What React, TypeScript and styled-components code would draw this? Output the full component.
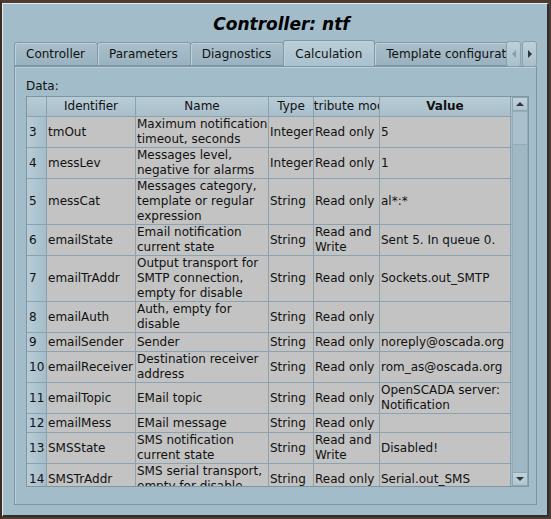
import React from "react";
import styled, { createGlobalStyle } from "styled-components";

const GlobalStyle = createGlobalStyle`
  html, body {
    margin: 0;
    padding: 0;
    background: #4d3b2f;
  }
  body {
    font-family: "DejaVu Sans", "Liberation Sans", sans-serif;
    font-size: 12px;
    color: #111;
  }
`;

const GRID = "#8aa3af";
const COLS = [20, 89, 133, 45, 66, 131];

const Window = styled.div`
  width: 551px;
  height: 519px;
  box-sizing: border-box;
  border-top: 3px solid #4d3b2f;
  border-left: 2px solid #3a2c22;
  border-right: 2px solid #4d3b2f;
  border-bottom: 2px solid #4d3b2f;
`;

const Frame = styled.div`
  height: 100%;
  box-sizing: border-box;
  background: #a3bcc9;
  border-top: 1px solid #e4edf1;
  border-left: 1px solid #e4edf1;
  border-right: 2px solid #2e2e2e;
  border-bottom: 2px solid #2e2e2e;
  display: flex;
  flex-direction: column;
  padding: 0 10px 10px 11px;
`;

const Title = styled.h1`
  margin: 0;
  height: 37px;
  box-sizing: border-box;
  padding: 9px 0 0 12px;
  text-align: center;
  font-size: 17px;
  line-height: 22px;
  font-weight: bold;
  font-style: italic;
  color: #000;
`;

const TabBar = styled.div`
  display: flex;
  height: 26px;
  align-items: flex-end;
  position: relative;
  z-index: 1;
`;

const TabsViewport = styled.div`
  width: 495px;
  display: flex;
  align-items: flex-end;
  overflow: hidden;
  height: 100%;
`;

const Tab = styled.div<{ $active?: boolean }>`
  flex: none;
  box-sizing: border-box;
  height: ${(p) => (p.$active ? "27px" : "24px")};
  margin-bottom: ${(p) => (p.$active ? "-1px" : "0")};
  padding: 0 12px 0 11px;
  display: flex;
  align-items: center;
  white-space: nowrap;
  border: 1px solid #8199a5;
  border-bottom: ${(p) => (p.$active ? "none" : "1px solid #8199a5")};
  border-radius: 3px 3px 0 0;
  margin-right: -1px;
  background: ${(p) =>
    p.$active
      ? "linear-gradient(#b9ced8, #a9c1cd)"
      : "linear-gradient(#a9bfcb, #9ab2bf)"};
  box-shadow: inset 1px 1px 0 #bfd2db;
  color: #111;
`;

const ArrowButtons = styled.div`
  display: flex;
  gap: 1px;
  margin-left: -2px;
  align-self: flex-start;
  margin-top: 1px;
`;

const ArrowButton = styled.div`
  width: 15px;
  height: 26px;
  box-sizing: border-box;
  border: 1px solid #8aa2ad;
  border-radius: 3px;
  background: linear-gradient(#bcd0d9, #a9c0cc);
  display: flex;
  align-items: center;
  justify-content: center;
`;

const Tri = styled.span<{ $dir: "left" | "right" | "up" | "down"; $dim?: boolean }>`
  width: 0;
  height: 0;
  border-style: solid;
  border-color: transparent;
  ${(p) => {
    const c = p.$dim ? "#8e9ea6" : "#2f3538";
    switch (p.$dir) {
      case "left":
        return `border-width: 4px 4px 4px 0; border-right-color: ${c};`;
      case "right":
        return `border-width: 4px 0 4px 4px; border-left-color: ${c};`;
      case "up":
        return `border-width: 0 4px 4px 4px; border-bottom-color: ${c};`;
      default:
        return `border-width: 4px 4px 0 4px; border-top-color: ${c};`;
    }
  }}
`;

const Pane = styled.div`
  flex: 1;
  box-sizing: border-box;
  border: 1px solid #7e96a2;
  box-shadow: inset 1px 1px 0 #bcd0d9;
  padding: 12px 9px 17px 11px;
  display: flex;
  flex-direction: column;
`;

const Label = styled.div`
  line-height: 15px;
  margin-bottom: 2px;
  color: #111;
`;

const TableFrame = styled.div`
  width: 503px;
  height: 391px;
  box-sizing: border-box;
  border: 1px solid #7f97a3;
  display: flex;
`;

const Grid = styled.div`
  flex: 1;
  overflow: hidden;
  display: flex;
  flex-direction: column;
`;

const HeaderRow = styled.div`
  display: flex;
  height: 19px;
  flex: none;
  border-bottom: 1px solid ${GRID};
  background: linear-gradient(#b8ccd6, #a8bfcb);
`;

const HeaderCell = styled.div<{ $w: number; $bold?: boolean }>`
  width: ${(p) => p.$w}px;
  flex: none;
  box-sizing: border-box;
  border-right: 1px solid ${GRID};
  display: flex;
  align-items: center;
  justify-content: center;
  overflow: hidden;
  white-space: nowrap;
  font-weight: ${(p) => (p.$bold ? "bold" : "normal")};
  line-height: 15px;
`;

const Row = styled.div`
  display: flex;
  flex: none;
  min-height: 18px;
  border-bottom: 1px solid ${GRID};
`;

const RowHead = styled.div<{ $w: number }>`
  width: ${(p) => p.$w}px;
  flex: none;
  box-sizing: border-box;
  border-right: 1px solid ${GRID};
  background: linear-gradient(90deg, #b7ccd7, #a5bdca);
  display: flex;
  align-items: center;
  padding-left: 2px;
  line-height: 15px;
  white-space: nowrap;
`;

const Cell = styled.div<{ $w: number }>`
  width: ${(p) => p.$w}px;
  flex: none;
  box-sizing: border-box;
  border-right: 1px solid ${GRID};
  background: #c3c3c3;
  display: flex;
  align-items: center;
  padding: 0 0 0 1px;
  line-height: 15px;
  overflow: hidden;
`;

const ScrollBar = styled.div`
  width: 16px;
  flex: none;
  display: flex;
  flex-direction: column;
  background: #a4bcc8;
`;

const ScrollBtn = styled.div`
  height: 14px;
  flex: none;
  box-sizing: border-box;
  border: 1px solid #8ea6b1;
  background: linear-gradient(#c0d3dc, #aec5d0);
  display: flex;
  align-items: center;
  justify-content: center;
`;

const Thumb = styled.div`
  height: 34px;
  flex: none;
  box-sizing: border-box;
  border: 1px solid #94abb6;
  background: #a9c0cc;
`;

const Track = styled.div`
  flex: 1;
  border-left: 1px solid #94abb6;
  border-right: 1px solid #94abb6;
  background: #a0b8c4;
`;

const rows: [number, string, string, string, string, string][] = [
  [3, "tmOut", "Maximum notification timeout, seconds", "Integer", "Read only", "5"],
  [4, "messLev", "Messages level, negative for alarms", "Integer", "Read only", "1"],
  [5, "messCat", "Messages category, template or regular expression", "String", "Read only", "al*:*"],
  [6, "emailState", "Email notification current state", "String", "Read and Write", "Sent 5. In queue 0."],
  [7, "emailTrAddr", "Output transport for SMTP connection, empty for disable", "String", "Read only", "Sockets.out_SMTP"],
  [8, "emailAuth", "Auth, empty for disable", "String", "Read only", ""],
  [9, "emailSender", "Sender", "String", "Read only", "noreply@oscada.org"],
  [10, "emailReceiver", "Destination receiver address", "String", "Read only", "rom_as@oscada.org"],
  [11, "emailTopic", "EMail topic", "String", "Read only", "OpenSCADA server: Notification"],
  [12, "emailMess", "EMail message", "String", "Read only", ""],
  [13, "SMSState", "SMS notification current state", "String", "Read and Write", "Disabled!"],
  [14, "SMSTrAddr", "SMS serial transport, empty for disable", "String", "Read only", "Serial.out_SMS"],
];

const tabs = ["Controller", "Parameters", "Diagnostics", "Calculation", "Template configuration"];

export default function App() {
  return (
    <>
      <GlobalStyle />
      <Window>
        <Frame>
          <Title>Controller: ntf</Title>
          <TabBar>
            <TabsViewport>
              {tabs.map((t) => (
                <Tab key={t} $active={t === "Calculation"}>
                  {t}
                </Tab>
              ))}
            </TabsViewport>
            <ArrowButtons>
              <ArrowButton>
                <Tri $dir="left" $dim />
              </ArrowButton>
              <ArrowButton>
                <Tri $dir="right" />
              </ArrowButton>
            </ArrowButtons>
          </TabBar>
          <Pane>
            <Label>Data:</Label>
            <TableFrame>
              <Grid>
                <HeaderRow>
                  <HeaderCell $w={COLS[0]} />
                  <HeaderCell $w={COLS[1]}>Identifier</HeaderCell>
                  <HeaderCell $w={COLS[2]}>Name</HeaderCell>
                  <HeaderCell $w={COLS[3]}>Type</HeaderCell>
                  <HeaderCell $w={COLS[4]}>Attribute mode</HeaderCell>
                  <HeaderCell $w={COLS[5]} $bold>
                    Value
                  </HeaderCell>
                </HeaderRow>
                {rows.map(([n, id, name, type, mode, value]) => (
                  <Row key={n}>
                    <RowHead $w={COLS[0]}>{n}</RowHead>
                    <Cell $w={COLS[1]}>{id}</Cell>
                    <Cell $w={COLS[2]}>{name}</Cell>
                    <Cell $w={COLS[3]}>{type}</Cell>
                    <Cell $w={COLS[4]}>{mode}</Cell>
                    <Cell $w={COLS[5]}>{value}</Cell>
                  </Row>
                ))}
              </Grid>
              <ScrollBar>
                <ScrollBtn>
                  <Tri $dir="up" />
                </ScrollBtn>
                <Thumb />
                <Track />
                <ScrollBtn>
                  <Tri $dir="down" />
                </ScrollBtn>
              </ScrollBar>
            </TableFrame>
          </Pane>
        </Frame>
      </Window>
    </>
  );
}
